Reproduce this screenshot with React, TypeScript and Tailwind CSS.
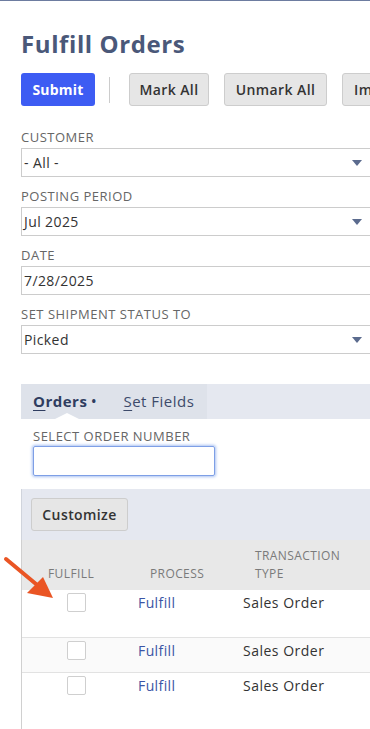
const FIELDS = [
  { label: 'CUSTOMER', value: '- All -', select: true },
  { label: 'POSTING PERIOD', value: 'Jul 2025', select: true },
  { label: 'DATE', value: '7/28/2025', select: false },
  { label: 'SET SHIPMENT STATUS TO', value: 'Picked', select: true },
];

const ROWS = [
  { h: 'h-[47px]', bg: 'bg-white', border: '' },
  { h: 'h-[35px]', bg: 'bg-[#fafafa]', border: 'border-t border-[#e2e2e2]' },
  { h: 'h-[60px]', bg: 'bg-white', border: 'border-t border-[#e2e2e2]' },
];

function Caret() {
  return (
    <svg width="10" height="6" viewBox="0 0 10 6" className="shrink-0">
      <polygon points="0,0 10,0 5,6" fill="#5b6b8e" />
    </svg>
  );
}

function GrayButton({ children, className = '' }: { children: React.ReactNode; className?: string }) {
  return (
    <div
      className={`flex h-[33px] shrink-0 items-center justify-center rounded-[3px] border border-[#cdcdcd] bg-[#e6e6e6] text-[14px] font-semibold tracking-[0.4px] text-[#333] ${className}`}
    >
      {children}
    </div>
  );
}

export default function App() {
  return (
    <div className="relative h-[729px] w-[370px] overflow-hidden border-t border-[#6d7ca0] bg-white font-['Open_Sans',sans-serif] text-[#333]">
      <div className="w-[500px] pl-[21px]">
        <h1 className="mt-[27px] h-8 text-[24px] font-bold leading-8 tracking-[0.6px] text-[#4a5879]">Fulfill Orders</h1>

        <div className="mt-[13px] flex items-center">
          <div className="flex h-[33px] w-[74px] shrink-0 items-center justify-center rounded-[3px] bg-[#3d5cf3] text-[14px] font-bold tracking-[0.2px] text-white">
            Submit
          </div>
          <div className="ml-[14px] mr-[19px] h-[26px] w-px shrink-0 bg-[#cccccc]" />
          <GrayButton className="w-[80px]">Mark All</GrayButton>
          <GrayButton className="ml-[15px] w-[103px]">Unmark All</GrayButton>
          <GrayButton className="ml-[15px] w-[100px] justify-start pl-[11px]">Import</GrayButton>
        </div>

        <div className="mt-[23px]">
          {FIELDS.map((f) => (
            <div key={f.label} className="mb-[11px]">
              <div className="h-4 text-[13px] leading-4 tracking-[0.5px] text-[#666]">{f.label}</div>
              <div className="mt-[3px] flex h-[29px] w-[360px] items-center justify-between border border-[#cccccc] pl-[2px] pr-[18px] text-[14px] tracking-[0.4px] text-[#333]">
                <span>{f.value}</span>
                {f.select && <Caret />}
              </div>
            </div>
          ))}
        </div>

        <div className="mt-[30px] w-[380px]">
          <div className="relative flex h-[35px]">
            <div className="flex w-[186px] items-center bg-[#dee2ea] pl-[12px] text-[15px] tracking-[0.5px] text-[#2f3d60]">
              <span className="font-bold">
                <span className="underline decoration-1 underline-offset-[3px]">O</span>rders
              </span>
              <span className="ml-[4px] text-[12px] font-bold">•</span>
              <span className="ml-[27px] text-[#3d4a6a]">
                <span className="underline decoration-1 underline-offset-[3px]">S</span>et Fields
              </span>
            </div>
            <div className="flex-1 bg-[#e5e8f0]" />
            <svg width="24" height="6" viewBox="0 0 24 6" className="absolute bottom-0 left-[34px]">
              <polygon points="0,6 12,0 24,6" fill="#ffffff" />
            </svg>
          </div>

          <div className="h-[70px] bg-white pl-[12px] pt-[9px]">
            <div className="h-4 text-[13px] leading-4 tracking-[0.5px] text-[#666]">SELECT ORDER NUMBER</div>
            <div className="mt-[2px] h-[30px] w-[182px] rounded-[2px] border border-[#7e9fe6] shadow-[0_0_3px_1px_#a9c2f2]" />
          </div>

          <div className="h-[51px] border-l border-[#d0d4dc] bg-[#e5e8f0] pl-[9px] pt-[9px]">
            <GrayButton className="h-[32px] w-[97px]">Customize</GrayButton>
          </div>

          <div className="border-l border-[#d0d0d0]">
            <div className="grid h-[50px] grid-cols-[116px_105px_1fr] items-end bg-[#e8e8e8] pb-[7px] text-[12px] leading-[18px] tracking-[0.4px] text-[#7a7a7a]">
              <div className="pl-[26px]">FULFILL</div>
              <div className="pl-[12px]">PROCESS</div>
              <div className="pl-[12px]">
                TRANSACTION
                <br />
                TYPE
              </div>
            </div>
            {ROWS.map((r, i) => (
              <div key={i} className={`grid grid-cols-[116px_105px_1fr] items-start pt-[3px] ${r.h} ${r.bg} ${r.border}`}>
                <div className="pl-[45px]">
                  <div className="h-[19px] w-[19px] rounded-[2px] border border-[#cfcfcf] bg-white" />
                </div>
                <div className="text-[14px] leading-[19px] tracking-[0.4px] text-[#3b55a5]">Fulfill</div>
                <div className="text-[14px] leading-[19px] tracking-[0.5px] text-[#333]">Sales Order</div>
              </div>
            ))}
          </div>
        </div>
      </div>

      <svg width="70" height="70" viewBox="0 0 70 70" className="absolute left-0 top-[540px]">
        <line x1="6" y1="18" x2="42" y2="48" stroke="#ea5524" strokeWidth="4" strokeLinecap="round" />
        <polygon points="53,57 27,52 43,36" fill="#ea5524" />
      </svg>
    </div>
  );
}
